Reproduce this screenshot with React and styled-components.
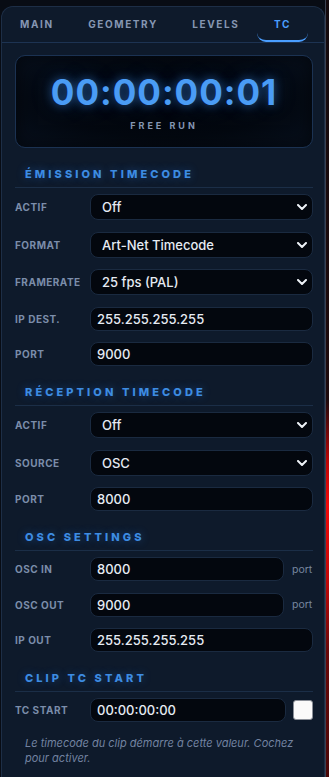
import styled, { createGlobalStyle } from "styled-components";

const GlobalStyle = createGlobalStyle`
  * { box-sizing: border-box; }
  body {
    margin: 0;
    background: #080c14;
    font-family: Inter, "Noto Sans", sans-serif;
  }
`;

const Page = styled.div`
  display: flex;
  min-height: 100vh;
  padding: 6px 0 0 1px;
`;

const Panel = styled.div`
  width: 324px;
  flex: none;
  background: #0e1a2b;
  border: 1px solid #1d2e46;
  border-bottom: none;
  border-radius: 12px 12px 0 0;
`;

const Backdrop = styled.div`
  flex: 1;
  margin-top: -6px;
  border-left: 1px solid #3a4252;
  background: linear-gradient(
    to bottom,
    #140a0d 0,
    #1e0a0c 400px,
    #b80606 460px,
    #f00a0a 505px,
    #c00808 580px,
    #6a0808 650px,
    #4a0707 777px
  );
`;

const Tabs = styled.div`
  display: flex;
  padding-left: 1px;
  border-bottom: 1px solid #1d3352;
`;

const Tab = styled.button`
  height: 35px;
  padding: 0 17.5px 0 17px;
  background: none;
  border: none;
  border-bottom: 2px solid ${(p) => (p.$active ? "#4a9eff" : "transparent")};
  border-radius: 0 0 9px 9px;
  color: ${(p) => (p.$active ? "#4a9eff" : "#8596b2")};
  font-family: Inter, sans-serif;
  font-size: 10px;
  font-weight: 700;
  letter-spacing: 1.6px;
  cursor: pointer;
`;

const Body = styled.div`
  padding: 12px 11px 0 13px;
`;

const TimecodeBox = styled.div`
  display: flex;
  flex-direction: column;
  align-items: center;
  padding: 19px 0 15px;
  border: 1px solid #1b3252;
  border-radius: 10px;
  background: radial-gradient(ellipse at center, #01040a 0%, #030810 55%, #07101e 100%);
  box-shadow: inset 0 0 18px rgba(0, 0, 0, 0.6);
`;

const TimeText = styled.div`
  font-family: Inter, sans-serif;
  font-size: 35px;
  font-weight: 700;
  line-height: 35px;
  letter-spacing: 1px;
  color: #4a9cf5;
  text-shadow: 0 0 10px rgba(60, 140, 240, 0.55), 0 0 22px rgba(60, 140, 240, 0.3);
`;

const ModeText = styled.div`
  margin-top: 10px;
  font-size: 9px;
  font-weight: 700;
  line-height: 12px;
  letter-spacing: 3px;
  color: #8596b2;
`;

const SectionTitle = styled.div`
  margin: 19px 0 6px;
  padding: 0 10px 6px;
  border-bottom: 1px solid #1b2e47;
  font-size: 11px;
  font-weight: 800;
  line-height: 14px;
  letter-spacing: 3.1px;
  color: #3d8ce2;
  text-shadow: 0 0 8px rgba(40, 120, 230, 0.45);
`;

const Fields = styled.div`
  display: flex;
  flex-direction: column;
  gap: 11.5px;
`;

const Row = styled.div`
  display: flex;
  align-items: center;
`;

const Label = styled.label`
  width: 75px;
  flex: none;
  font-size: 10px;
  font-weight: 700;
  letter-spacing: 0.5px;
  color: #7b8daa;
`;

const SelectWrap = styled.div`
  position: relative;
  flex: 1;
  min-width: 0;
`;

const Select = styled.select`
  display: block;
  width: 100%;
  height: 26px;
  padding: 0 24px 0 11px;
  appearance: none;
  background: #03070e;
  border: 1px solid #1a2a40;
  border-radius: 8px;
  color: #e6ebf3;
  font-family: Inter, sans-serif;
  font-size: 13px;
  font-weight: 500;
  outline: none;
`;

const Chevron = styled.svg`
  position: absolute;
  right: 6px;
  top: 10px;
  pointer-events: none;
`;

const TextInput = styled.input`
  flex: 1;
  min-width: 0;
  height: 24px;
  padding: 0 6px;
  background: #03070e;
  border: 1px solid #1a2a40;
  border-radius: 8px;
  color: #e6ebf3;
  font-family: Inter, sans-serif;
  font-size: 13px;
  font-weight: 500;
  outline: none;
`;

const Unit = styled.span`
  width: 21px;
  margin-left: 8px;
  flex: none;
  font-size: 10.5px;
  color: #76869f;
`;

const Check = styled.input.attrs({ type: "checkbox" })`
  width: 20px;
  height: 20px;
  margin: 0 0 0 7px;
  flex: none;
  appearance: none;
  background: #fafafa;
  border: 1px solid #8a8f98;
  border-radius: 3px;
`;

const Note = styled.p`
  margin: 14px 0 0;
  padding: 0 10px;
  font-size: 11px;
  font-style: italic;
  line-height: 15px;
  color: #7282a0;
`;

function SelectField({ label, value, options }) {
  return (
    <Row>
      <Label>{label}</Label>
      <SelectWrap>
        <Select defaultValue={value}>
          {options.map((o) => (
            <option key={o}>{o}</option>
          ))}
        </Select>
        <Chevron width="10" height="6" viewBox="0 0 10 6">
          <path d="M1 1l4 4 4-4" fill="none" stroke="#eef2f7" strokeWidth="2" strokeLinecap="round" strokeLinejoin="round" />
        </Chevron>
      </SelectWrap>
    </Row>
  );
}

function InputField({ label, value, unit, check }) {
  return (
    <Row>
      <Label>{label}</Label>
      <TextInput defaultValue={value} />
      {unit && <Unit>{unit}</Unit>}
      {check && <Check />}
    </Row>
  );
}

const tabs = ["MAIN", "GEOMETRY", "LEVELS", "TC"];

export default function App() {
  return (
    <>
      <GlobalStyle />
      <Page>
        <Panel>
          <Tabs>
            {tabs.map((t) => (
              <Tab key={t} $active={t === "TC"}>
                {t}
              </Tab>
            ))}
          </Tabs>
          <Body>
            <TimecodeBox>
              <TimeText>00:00:00:01</TimeText>
              <ModeText>FREE RUN</ModeText>
            </TimecodeBox>

            <SectionTitle>ÉMISSION TIMECODE</SectionTitle>
            <Fields>
              <SelectField label="ACTIF" value="Off" options={["Off", "On"]} />
              <SelectField label="FORMAT" value="Art-Net Timecode" options={["Art-Net Timecode", "LTC", "MTC"]} />
              <SelectField label="FRAMERATE" value="25 fps (PAL)" options={["24 fps", "25 fps (PAL)", "30 fps"]} />
              <InputField label="IP DEST." value="255.255.255.255" />
              <InputField label="PORT" value="9000" />
            </Fields>

            <SectionTitle>RÉCEPTION TIMECODE</SectionTitle>
            <Fields>
              <SelectField label="ACTIF" value="Off" options={["Off", "On"]} />
              <SelectField label="SOURCE" value="OSC" options={["OSC", "Art-Net"]} />
              <InputField label="PORT" value="8000" />
            </Fields>

            <SectionTitle>OSC SETTINGS</SectionTitle>
            <Fields>
              <InputField label="OSC IN" value="8000" unit="port" />
              <InputField label="OSC OUT" value="9000" unit="port" />
              <InputField label="IP OUT" value="255.255.255.255" />
            </Fields>

            <SectionTitle>CLIP TC START</SectionTitle>
            <Fields>
              <InputField label="TC START" value="00:00:00:00" check />
            </Fields>
            <Note>Le timecode du clip démarre à cette valeur. Cochez pour activer.</Note>
          </Body>
        </Panel>
        <Backdrop />
      </Page>
    </>
  );
}
